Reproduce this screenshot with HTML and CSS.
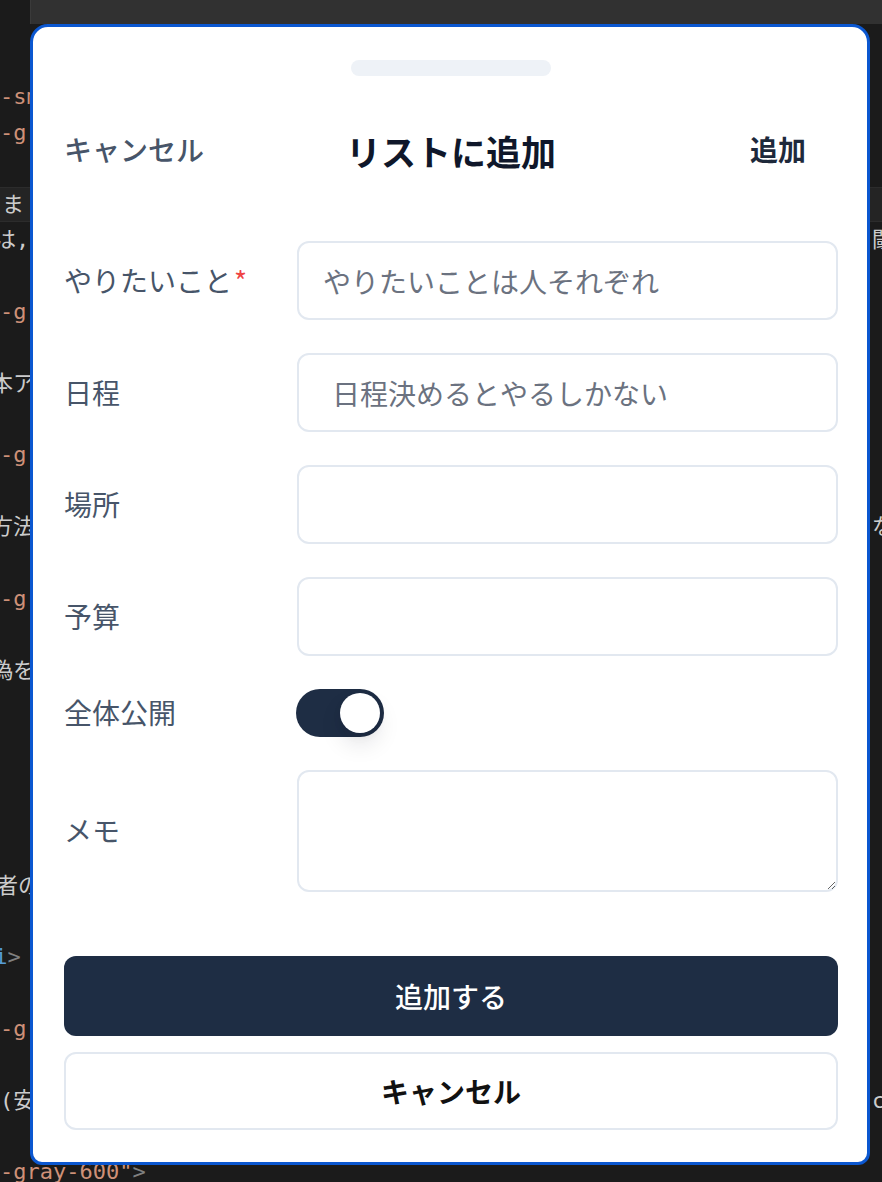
FILE: index.html
```html
<!DOCTYPE html>
<html lang="ja">
<head>
<meta charset="utf-8">
<title>リストに追加</title>
<link rel="stylesheet" href="styles.css">
</head>
<body>
<div class="workbench">
  <div class="tabbar"></div>
  <div class="code">
    <div class="line"><span class="l"><span class="str">-sm</span></span><span class="r"></span></div>
    <div class="line"><span class="l"><span class="str">-gr</span></span><span class="r"></span></div>
    <div class="line"><span class="l"></span><span class="r"></span></div>
    <div class="line hl"><span class="l cut-a">をま</span><span class="r"></span></div>
    <div class="line"><span class="l cut-b">は,</span><span class="r">閾</span></div>
    <div class="line"><span class="l"></span><span class="r"></span></div>
    <div class="line"><span class="l"><span class="str">-gr</span></span><span class="r"></span></div>
    <div class="line"><span class="l"></span><span class="r"></span></div>
    <div class="line"><span class="l cut-c">本ア</span><span class="r"></span></div>
    <div class="line"><span class="l"></span><span class="r"></span></div>
    <div class="line"><span class="l"><span class="str">-gr</span></span><span class="r"></span></div>
    <div class="line"><span class="l"></span><span class="r"></span></div>
    <div class="line"><span class="l cut-c">方法</span><span class="r">な</span></div>
    <div class="line"><span class="l"></span><span class="r"></span></div>
    <div class="line"><span class="l"><span class="str">-gr</span></span><span class="r"></span></div>
    <div class="line"><span class="l"></span><span class="r"></span></div>
    <div class="line"><span class="l cut-c">偽を</span><span class="r"></span></div>
    <div class="line"><span class="l"></span><span class="r"></span></div>
    <div class="line"><span class="l"></span><span class="r"></span></div>
    <div class="line"><span class="l"></span><span class="r"></span></div>
    <div class="line"><span class="l"></span><span class="r"></span></div>
    <div class="line"><span class="l"></span><span class="r"></span></div>
    <div class="line"><span class="l cut-d">者の</span><span class="r"></span></div>
    <div class="line"><span class="l"></span><span class="r"></span></div>
    <div class="line"><span class="l cut-e"><span class="tag">li</span><span class="punc">&gt;</span></span><span class="r"></span></div>
    <div class="line"><span class="l"></span><span class="r"></span></div>
    <div class="line"><span class="l"><span class="str">-gr</span></span><span class="r"></span></div>
    <div class="line"><span class="l"></span><span class="r"></span></div>
    <div class="line"><span class="l">(安</span><span class="r">c</span></div>
    <div class="line"><span class="l"></span><span class="r"></span></div>
    <div class="line"><span class="l"><span class="str">-gray-600"</span><span class="punc">&gt;</span></span><span class="r"></span></div>
  </div>
</div>

<div class="sheet">
  <div class="handle"></div>

  <div class="sheet-header">
    <button class="hdr-cancel" type="button">キャンセル</button>
    <h1 class="sheet-title">リストに追加</h1>
    <button class="hdr-add" type="button">追加</button>
  </div>

  <form class="form">
    <label class="field-label">やりたいこと<span class="req">*</span></label>
    <input class="field-input" type="text" placeholder="やりたいことは人それぞれ">

    <label class="field-label">日程</label>
    <input class="field-input field-date" type="text" placeholder="日程決めるとやるしかない">

    <label class="field-label">場所</label>
    <input class="field-input" type="text">

    <label class="field-label">予算</label>
    <input class="field-input" type="text">

    <label class="field-label">全体公開</label>
    <div class="toggle-cell">
      <div class="toggle"><div class="knob"></div></div>
    </div>

    <label class="field-label">メモ</label>
    <textarea class="field-memo"></textarea>
  </form>

  <button class="btn-primary" type="button">追加する</button>
  <button class="btn-secondary" type="button">キャンセル</button>
</div>
</body>
</html>
```

FILE: styles.css
```css
* {
  box-sizing: border-box;
  margin: 0;
  padding: 0;
}

html, body {
  width: 882px;
  height: 1182px;
  overflow: hidden;
  background: #1b1b1b;
}

body {
  position: relative;
  font-family: "Noto Sans CJK JP", "Noto Sans", sans-serif;
}

/* ---------- background editor ---------- */
.tabbar {
  height: 24px;
  margin-left: 30px;
  background: #313131;
  border-left: 1px solid #3a3a3a;
}

.code {
  padding-top: 55px;
  font-family: "DejaVu Sans Mono", "Noto Sans CJK JP", monospace;
  font-size: 22px;
  color: #cccccc;
}

.line {
  height: 35.85px;
  line-height: 35.85px;
  display: grid;
  grid-template-columns: 870px 12px;
  white-space: nowrap;
}

.line .l,
.line .r {
  overflow: hidden;
}

.line .r {
  padding-left: 2px;
  color: #cccccc;
}

.line.hl {
  background: #242424;
  box-shadow: inset 0 1px 0 #2c2c2c, inset 0 -1px 0 #2c2c2c;
}

.cut-a { text-indent: -20px; }
.cut-b { text-indent: -6px; }
.cut-c { text-indent: -9px; }
.cut-d { text-indent: -4px; }
.cut-e { text-indent: -19px; }

.str { color: #ce9178; }
.tag { color: #569cd6; }
.punc { color: #808080; }

/* ---------- sheet ---------- */
.sheet {
  position: absolute;
  left: 30px;
  top: 24px;
  width: 840px;
  height: 1141px;
  background: #ffffff;
  border: 3px solid #0b57d0;
  border-radius: 18px 18px 12px 12px;
  padding: 33px 29px 0 31px;
  display: flex;
  flex-direction: column;
}

.handle {
  align-self: center;
  width: 200px;
  height: 16px;
  border-radius: 8px;
  background: #eef2f7;
}

.sheet-header {
  margin-top: 46px;
  height: 56px;
  display: grid;
  grid-template-columns: 1fr auto 1fr;
  align-items: center;
}

.sheet-header button {
  background: none;
  border: none;
  font-family: inherit;
  font-size: 28px;
  line-height: 1.4;
  cursor: pointer;
}

.hdr-cancel {
  justify-self: start;
  color: #475569;
  font-weight: 500;
}

.sheet-title {
  font-size: 35px;
  font-weight: 700;
  color: #0f172a;
  line-height: 1.4;
}

.hdr-add {
  justify-self: end;
  padding-right: 32px;
  color: #1e293b;
  font-weight: 600;
}

.form {
  margin-top: 63px;
  display: grid;
  grid-template-columns: 233px 1fr;
  row-gap: 33px;
  align-items: center;
}

.field-label {
  font-size: 28px;
  color: #475569;
  font-weight: 400;
  line-height: 1.4;
}

.req {
  color: #ef4444;
  margin-left: 2px;
}

.field-input,
.field-memo {
  width: 100%;
  border: 2px solid #e2e8f0;
  border-radius: 12px;
  font-family: inherit;
  font-size: 28px;
  color: #111827;
  background: #ffffff;
  outline: none;
}

.field-input {
  height: 79px;
  padding: 0 24px;
}

.field-date {
  padding-left: 33px;
}

.field-input::placeholder {
  color: #6b7280;
}

.field-memo {
  height: 122px;
  padding: 16px 24px;
  resize: vertical;
  display: block;
}

.toggle-cell {
  height: 48px;
  display: flex;
  align-items: center;
}

.toggle {
  width: 88px;
  height: 48px;
  border-radius: 24px;
  background: #1e2d44;
  padding: 4px;
  display: flex;
  justify-content: flex-end;
  margin-left: -1px;
}

.knob {
  width: 40px;
  height: 40px;
  border-radius: 50%;
  background: #ffffff;
  box-shadow: 0 12px 22px rgba(15, 23, 42, 0.10), 0 4px 8px rgba(15, 23, 42, 0.06);
}

.btn-primary,
.btn-secondary {
  width: 100%;
  font-family: inherit;
  font-size: 28px;
  border-radius: 12px;
  cursor: pointer;
}

.btn-primary {
  margin-top: 64px;
  height: 80px;
  background: #1e2d44;
  color: #ffffff;
  border: none;
  font-weight: 500;
}

.btn-secondary {
  margin-top: 16px;
  height: 78px;
  background: #ffffff;
  color: #111111;
  border: 2px solid #e2e8f0;
  font-weight: 700;
}
```
